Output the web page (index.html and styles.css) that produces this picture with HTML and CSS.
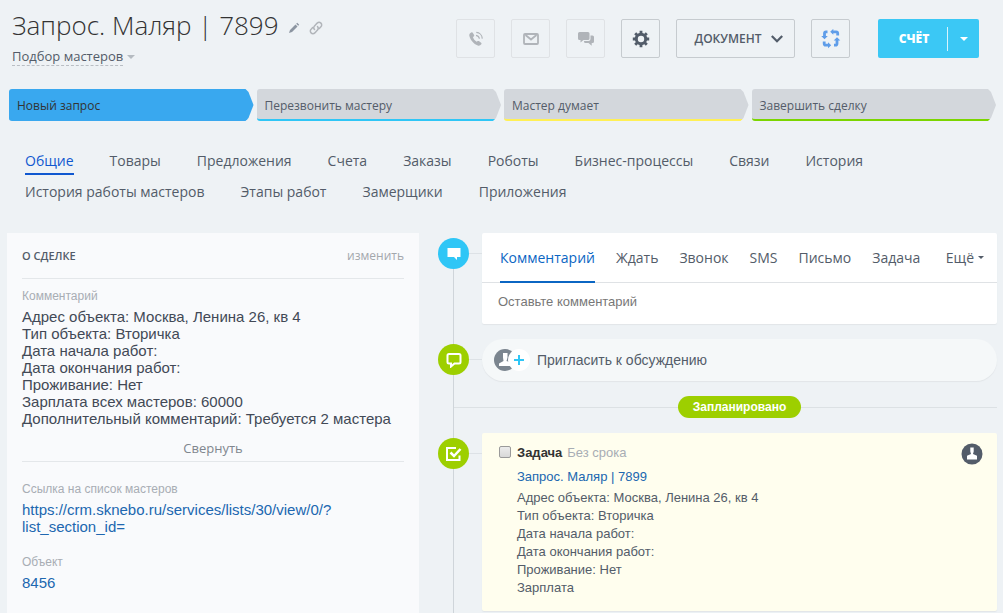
FILE: index.html
```html
<!DOCTYPE html>
<html lang="ru">
<head>
<meta charset="utf-8">
<title>Запрос. Маляр | 7899</title>
<link rel="stylesheet" href="styles.css">
</head>
<body>
<header class="header">
  <div class="heading">
    <div class="title-row">
      <h1 class="title">Запрос. Маляр | 7899</h1>
      <button class="icon-btn" aria-label="Переименовать">
        <svg width="12" height="12" viewBox="0 0 12 12"><path d="M1 11l1-3 5.500-5.500 2 2L4 10zM8.200 1.800l1-1 2 2-1 1z" fill="#8c95a1"/></svg>
      </button>
      <button class="icon-btn" aria-label="Ссылка">
        <svg width="14" height="14" viewBox="0 0 14 14" fill="none" stroke="#b1b5ba" stroke-width="1.500" stroke-linecap="round"><path d="M5.500 8.500a2.600 2.600 0 0 1 0-3.500l2.700-2.900a2.600 2.600 0 0 1 3.700 3.700L10.300 7.500"/><path d="M8.500 5.500a2.600 2.600 0 0 1 0 3.500l-2.700 2.900a2.600 2.600 0 0 1-3.700-3.700l1.600-1.700"/></svg>
      </button>
    </div>
    <button class="category"><span class="category-name">Подбор мастеров</span><svg width="8" height="4" viewBox="0 0 8 4"><path d="M0 0h8L4 4z" fill="#b5bbc1"/></svg></button>
  </div>
  <div class="toolbar">
    <button class="tool muted" aria-label="Позвонить">
      <svg width="16" height="16" viewBox="0 0 16 16"><path d="M3.300 1.600c.6-.4 1.200-.3 1.600.3l1.200 2c.3.600.2 1.100-.3 1.500l-.9.7c.4 1.700 2 3.800 3.800 4.700l1-.7c.5-.3 1-.3 1.500.1l1.900 1.500c.5.400.6 1 .2 1.500-.9 1.200-2.100 1.800-3.500 1.300C5.500 13 2.300 9 1.300 4.800 1 3.400 2 2.300 3.300 1.600z" fill="#b0b4b9"/><g fill="none" stroke="#b0b4b9" stroke-width="1.200"><path d="M8 4.300c1.800.2 3.200 1.600 3.400 3.500"/><path d="M8.300 1.400c3.300.2 5.800 2.800 6 6.200"/></g></svg>
    </button>
    <button class="tool muted" aria-label="Письмо">
      <svg width="16" height="12" viewBox="0 0 16 12" fill="none" stroke="#b0b4b9" stroke-width="1.800"><rect x="1" y="1" width="14" height="10" rx="1"/><path d="M2.500 2l5.500 4.500L13.500 2"/></svg>
    </button>
    <button class="tool muted" aria-label="Чат">
      <svg width="16" height="14" viewBox="0 0 16 14" fill="#b0b4b9"><path d="M1.500 0h8.500a1.500 1.500 0 0 1 1.500 1.500v5A1.500 1.500 0 0 1 10 8H5.500L2.500 10.500V8h-1A1.500 1.500 0 0 1 0 6.500v-5A1.500 1.500 0 0 1 1.500 0z"/><path d="M12.500 3.500h2A1.500 1.500 0 0 1 16 5v4.500a1.500 1.500 0 0 1-1.500 1.500h-.8v2.800L10.500 11H7.500A1.500 1.500 0 0 1 6 9.500V9h4.500a2 2 0 0 0 2-2z"/></svg>
    </button>
    <button class="tool" aria-label="Настройки">
      <svg width="18" height="18" viewBox="-9 -9 18 18"><circle r="4.700" fill="none" stroke="#525c69" stroke-width="3"/><g stroke="#525c69" stroke-width="2.800"><path d="M0-8.200v3M0 8.200v-3M-8.200 0h3M8.200 0h-3M-5.800-5.800l2 2M5.800 5.800l-2-2M-5.800 5.800l2-2M5.800-5.800l-2 2"/></g></svg>
    </button>
    <button class="tool wide">ДОКУМЕНТ <svg width="12" height="8" viewBox="0 0 12 8" fill="none" stroke="#525c69" stroke-width="2.200"><path d="M.8 1L6 6.200 11.200 1"/></svg></button>
    <button class="tool" aria-label="Обновить">
      <svg width="20" height="20" viewBox="0 0 20 20"><g fill="none" stroke="#5f9de9" stroke-width="2.800"><path d="M6.500 2.800H5Q3.500 2.800 3.500 4.300V7.500"/><path d="M11.500 2.800h3.700q1.500 0 1.500 1.500v2.200"/><path d="M16 11v3.500q0 1.700-1.500 1.700H13"/><path d="M3.200 12.500v2q0 1.700 1.500 1.700H7.500"/></g><g fill="#5f9de9"><path d="M.2 7h6.600L3.500 10.200zM12.300-.2v6L9.200 2.800zM12.700 11.500h6.600L16 8.200zM7 13.200v6l3.200-3z"/></g></svg>
    </button>
    <div class="split">
      <button class="split-main">СЧЁТ</button>
      <button class="split-more" aria-label="Ещё варианты"><svg width="8" height="4" viewBox="0 0 8 4"><path d="M0 0h8L4 4z" fill="#fff"/></svg></button>
    </div>
  </div>
</header>

<div class="stages">
  <button class="stage current">Новый запрос</button>
  <button class="stage cyan">Перезвонить мастеру</button>
  <button class="stage yellow">Мастер думает</button>
  <button class="stage green">Завершить сделку</button>
</div>

<nav class="tabs">
  <a class="tab active" href="#">Общие</a>
  <a class="tab" href="#">Товары</a>
  <a class="tab" href="#">Предложения</a>
  <a class="tab" href="#">Счета</a>
  <a class="tab" href="#">Заказы</a>
  <a class="tab" href="#">Роботы</a>
  <a class="tab" href="#">Бизнес-процессы</a>
  <a class="tab" href="#">Связи</a>
  <a class="tab" href="#">История</a>
  <a class="tab" href="#">История работы мастеров</a>
  <a class="tab" href="#">Этапы работ</a>
  <a class="tab" href="#">Замерщики</a>
  <a class="tab" href="#">Приложения</a>
</nav>

<main class="content">
  <section class="deal">
    <div class="deal-head">
      <h2 class="deal-title">О СДЕЛКЕ</h2>
      <a class="edit" href="#">изменить</a>
    </div>
    <div class="field comment">
      <div class="label">Комментарий</div>
      <p class="value">Адрес объекта: Москва, Ленина 26, кв 4<br>Тип объекта: Вторичка<br>Дата начала работ:<br>Дата окончания работ:<br>Проживание: Нет<br>Зарплата всех мастеров: 60000<br>Дополнительный комментарий: Требуется 2 мастера</p>
      <button class="collapse">Свернуть</button>
    </div>
    <div class="field">
      <div class="label">Ссылка на список мастеров</div>
      <a class="value link" href="#">https://crm.sknebo.ru/services/lists/30/view/0/?<wbr>list_section_id=</a>
    </div>
    <div class="field">
      <div class="label">Объект</div>
      <a class="value link" href="#">8456</a>
    </div>
  </section>

  <section class="timeline">
    <div class="row">
      <span class="dot blue"><svg width="14" height="13" viewBox="0 0 14 13"><path d="M.5 1h13v9H10v3L7 10H.5z" fill="#fff"/></svg></span>
      <div class="editor">
        <div class="editor-tabs">
          <a class="editor-tab active" href="#">Комментарий</a>
          <a class="editor-tab" href="#">Ждать</a>
          <a class="editor-tab" href="#">Звонок</a>
          <a class="editor-tab" href="#">SMS</a>
          <a class="editor-tab" href="#">Письмо</a>
          <a class="editor-tab" href="#">Задача</a>
          <a class="editor-tab more" href="#">Ещё<svg width="6" height="3" viewBox="0 0 6 3"><path d="M0 0h6L3 3z" fill="#535c69"/></svg></a>
        </div>
        <input class="editor-input" type="text" placeholder="Оставьте комментарий" aria-label="Оставьте комментарий">
      </div>
    </div>
    <div class="row">
      <span class="dot"><svg width="16" height="16" viewBox="0 0 16 16" fill="none" stroke="#fff" stroke-width="2"><path d="M3 2h10q1.500 0 1.500 1.500v6.500q0 1.500-1.500 1.500H8.500L5 14.500v-3H3q-1.500 0-1.500-1.500V3.500Q1.500 2 3 2z"/></svg></span>
      <button class="invite">
        <svg width="36" height="24" viewBox="0 0 36 24"><circle cx="11" cy="12" r="11" fill="#7b858f"/><path d="M9 5h4.500v4.500l-1 3.500 4.500 1.500v3.500H5v-2.500l4.500-2.500-.5-3.500z" fill="#fff"/><circle cx="25" cy="12" r="11" fill="#fff"/><path d="M20 12h10M25 7v10" stroke="#2fc6f6" stroke-width="2"/></svg>
        Пригласить к обсуждению
      </button>
    </div>
    <div class="divider"><span class="badge">Запланировано</span></div>
    <div class="row">
      <span class="dot"><svg width="18" height="16" viewBox="0 0 18 16" fill="none" stroke="#fff" stroke-width="2"><path d="M11 2H2v12h12.500v-4.500"/><path d="M5.500 6.500l3.500 3.500 6.500-7" stroke-width="2.500"/></svg></span>
      <article class="task">
        <input class="task-check" type="checkbox" id="task">
        <div class="task-body">
          <div class="task-head"><label class="task-type" for="task">Задача</label><span class="task-term">Без срока</span></div>
          <a class="task-link" href="#">Запрос. Маляр | 7899</a>
          <p class="task-text">Адрес объекта: Москва, Ленина 26, кв 4<br>Тип объекта: Вторичка<br>Дата начала работ:<br>Дата окончания работ:<br>Проживание: Нет<br>Зарплата</p>
        </div>
        <svg class="avatar" width="22" height="22" viewBox="0 0 22 22"><circle cx="11" cy="11" r="10.500" fill="#535c69"/><path d="M9.300 4.500h3.400v4l-.7 2.500 4 1.800V16.500H6v-3.700l4-1.800-.7-2.500z" fill="#fff"/></svg>
      </article>
    </div>
  </section>
</main>
</body>
</html>
```
FILE: styles.css
```css
* {
  box-sizing: border-box;
}

body {
  margin: 0;
  background: #eef2f5;
  color: #535c69;
  font-family: "Liberation Sans", Arial, sans-serif;
  font-size: 13px;
}

button {
  padding: 0;
  border: 0;
  background: none;
  color: inherit;
  font: inherit;
  cursor: pointer;
}

a {
  color: inherit;
  text-decoration: none;
}

svg {
  display: block;
  flex: none;
}

h1,
h2,
p {
  margin: 0;
}

/* Header */
.header {
  display: flex;
  justify-content: space-between;
  align-items: flex-start;
  padding: 7px 24px 0 12px;
}

.title-row {
  display: flex;
  align-items: center;
  gap: 9px;
}

.title {
  color: #333;
  font-family: "Open Sans", sans-serif;
  font-size: 26px;
  font-weight: 300;
  line-height: 36px;
}

.icon-btn {
  padding-top: 6px;
}

.category {
  display: flex;
  align-items: center;
  gap: 4px;
  margin-top: 4px;
  font-family: "Open Sans", sans-serif;
  font-size: 13px;
  line-height: 18px;
}

.category-name {
  border-bottom: 1px dashed #b9bec4;
}

.toolbar {
  display: flex;
  gap: 16px;
  padding-top: 12px;
}

.tool {
  display: flex;
  align-items: center;
  justify-content: center;
  gap: 9px;
  width: 39px;
  height: 39px;
  border: 1px solid #c6cbcf;
  border-radius: 2px;
}

.muted {
  border-color: #dfe2e5;
}

.wide {
  width: 119px;
  padding-left: 6px;
  font-family: "Open Sans", sans-serif;
  font-size: 12px;
  font-weight: 600;
}

.split {
  display: flex;
  align-items: center;
  height: 39px;
  margin-left: 12px;
  border-radius: 2px;
  background: #3bc8f5;
  color: #fff;
  font-family: "Open Sans", sans-serif;
  font-size: 12px;
  font-weight: 800;
}

.split-main {
  width: 70px;
  height: 24px;
  padding-left: 3px;
  border-right: 1px solid #d8f4fd;
}

.split-more {
  display: flex;
  justify-content: center;
  width: 31px;
}

/* Stages */
.stages {
  display: grid;
  grid-template-columns: repeat(4, 1fr);
  gap: 3px;
  padding: 23px 7px 0 9px;
}

.stage {
  height: 32px;
  padding: 3px 0 0 8px;
  border-bottom: 2px solid #d3d7dc;
  border-radius: 3px;
  background: #d3d7dc;
  clip-path: polygon(0 0, calc(100% - 8px) 0, calc(100% - 5px) 3px, 100% 50%, calc(100% - 5px) calc(100% - 3px), calc(100% - 8px) 100%, 0 100%);
  color: #545c69;
  font-family: "Open Sans", sans-serif;
  font-size: 12px;
  font-weight: 500;
  line-height: 27px;
  text-align: left;
}

.current {
  border-color: #39a8ef;
  background: #39a8ef;
  color: #333;
}

.cyan {
  border-color: #2fc6f6;
}

.yellow {
  border-color: #fff055;
}

.green {
  border-color: #7bd500;
}

/* Section tabs */
.tabs {
  display: flex;
  flex-wrap: wrap;
  gap: 4px 36px;
  padding: 27px 100px 0 25px;
  font-family: "Open Sans", sans-serif;
  font-size: 14px;
  font-weight: 500;
}

.tab {
  height: 27px;
  border-bottom: 2px solid transparent;
  line-height: 26px;
}

.tab.active {
  border-color: #1058d0;
  color: #1058d0;
}

/* Columns */
.content {
  display: grid;
  grid-template-columns: 412fr 559fr;
  gap: 19px;
  min-height: 380px;
  padding: 27px 6px 0 7px;
}

.deal {
  padding: 0 15px;
  background: #f9fafc;
}

.deal-head {
  display: flex;
  align-items: center;
  justify-content: space-between;
  height: 46px;
  border-bottom: 1px solid #e4e7ea;
}

.deal-title {
  font-family: "Open Sans", sans-serif;
  font-size: 11px;
  font-weight: 600;
}

.edit {
  color: #a3a7ac;
  font-family: "Open Sans", sans-serif;
  font-size: 12px;
}

.field {
  padding-top: 19px;
}

.comment {
  padding-top: 9px;
  border-bottom: 1px solid #e4e7ea;
}

.label {
  margin-bottom: 4px;
  color: #a8adb4;
  font-size: 12px;
  line-height: 16px;
}

.value {
  display: block;
  color: #424956;
  font-size: 15px;
  line-height: 17px;
}

.link,
.task-link {
  color: #2067b0;
}

.collapse {
  display: block;
  margin: 12px auto 4px;
  color: #80868e;
  font-family: "Open Sans", sans-serif;
  line-height: 18px;
}

/* Timeline */
.timeline {
  position: relative;
}

.timeline::before {
  content: "";
  position: absolute;
  top: 20px;
  bottom: 0;
  left: 15px;
  width: 1px;
  background: #cfd5da;
}

.row {
  position: relative;
  display: grid;
  grid-template-columns: 31px 1fr;
  gap: 13px;
  margin-bottom: 15px;
}

.row::before {
  content: "";
  position: absolute;
  top: 20px;
  left: 31px;
  width: 13px;
  height: 1px;
  background: #dde2e6;
}

.dot {
  display: flex;
  align-items: center;
  justify-content: center;
  width: 31px;
  height: 31px;
  margin-top: 5px;
  border-radius: 50%;
  background: #9dcf00;
}

.blue {
  background: #2fc6f6;
}

.editor {
  border-radius: 2px;
  background: #fff;
  box-shadow: 0 1px 1px #e1e5e8;
}

.editor-tabs {
  display: flex;
  gap: 21px;
  height: 50px;
  padding: 0 13px 0 18px;
  border-bottom: 1px solid #dfe2e5;
  font-family: "Open Sans", sans-serif;
  font-size: 14px;
  line-height: 50px;
}

.editor-tab.active {
  height: 50px;
  border-bottom: 2px solid #0b66c3;
  color: #0b66c3;
}

.more {
  display: flex;
  align-items: center;
  gap: 4px;
  margin-left: auto;
}

.editor-input {
  display: block;
  width: 100%;
  height: 41px;
  padding: 0 16px 4px;
  border: 0;
  background: none;
  color: #535c69;
  font: 13px "Liberation Sans", Arial, sans-serif;
}

.editor-input::placeholder {
  color: #777;
}

.invite {
  display: flex;
  align-items: center;
  gap: 7px;
  height: 42px;
  padding-left: 12px;
  border-radius: 21px;
  background: #f5f8f9;
  box-shadow: 0 1px 1px #e1e5e8;
  font-size: 14px;
}

.divider {
  display: flex;
  align-items: center;
  margin: 0 0 15px 15px;
}

.divider::before,
.divider::after {
  content: "";
  flex: 1 1 0;
  height: 1px;
  background: #dce1e4;
}

/* The left rule also spans the gutter, so the badge centres on the cards */
.divider::before {
  flex-basis: 29px;
}

.badge {
  padding: 0 15px;
  border-radius: 11px;
  background: #9dcf00;
  color: #fff;
  font-size: 12px;
  font-weight: 700;
  line-height: 22px;
}

.task {
  display: flex;
  align-items: flex-start;
  padding: 10px 14px 14px 17px;
  border-radius: 2px;
  background: #fffeee;
  box-shadow: 0 1px 1px #e1e5e8;
}

.task-check {
  appearance: none;
  width: 12px;
  height: 12px;
  margin: 3px 6px 0 0;
  border: 1px solid #9a9a9a;
  border-radius: 2px;
  background: linear-gradient(#ececec, #d8d8d8);
}

.task-body {
  flex: 1;
  padding-top: 1px;
  line-height: 18px;
}

.task-head {
  display: flex;
  gap: 5px;
}

.task-type {
  color: #333;
  font-weight: 700;
}

.task-term {
  color: #a8adb4;
}

.task-link {
  display: block;
  margin: 6px 0 3px;
}
```
